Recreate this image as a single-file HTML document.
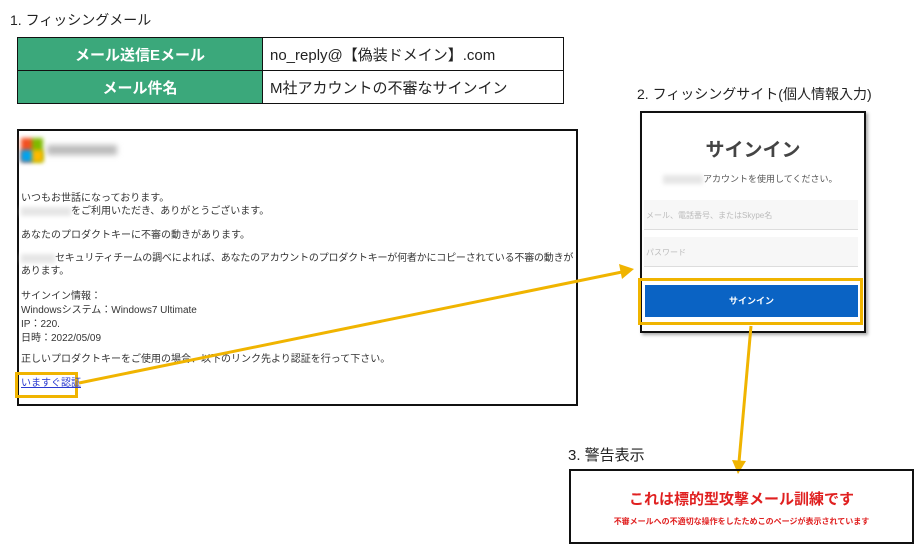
<!DOCTYPE html>
<html><head><meta charset="utf-8"><style>
*{margin:0;padding:0;box-sizing:border-box}
body{width:915px;height:545px;background:#fff;position:relative;overflow:hidden;font-family:"Liberation Sans","Noto Sans CJK JP",sans-serif;color:#222}
.a{position:absolute}
table{position:absolute;left:17px;top:37px;border-collapse:collapse}
td{border:1.5px solid #111;height:33px;font-size:15px}
td.g{background:#3ba87b;color:#fff;font-weight:bold;text-align:center;width:245px}
td.v{width:301px;padding-left:7px}
.em{font-size:10px;color:#333;line-height:13px}
.blur{display:inline-block;background:#e6e6e6;filter:blur(2px);height:9px;vertical-align:middle}
</style></head><body>
<div class="a" style="left:10px;top:10px;font-size:14px">1. フィッシングメール</div>
<table><tr><td class="g">メール送信Eメール</td><td class="v">no_reply@【偽装ドメイン】.com</td></tr>
<tr><td class="g">メール件名</td><td class="v">M社アカウントの不審なサインイン</td></tr></table>

<div class="a" style="left:17px;top:129px;width:561px;height:277px;border:2px solid #111"></div>
<div class="a" style="left:21px;top:138px;width:22px;height:24px;filter:blur(2px);background:linear-gradient(90deg,#f25022 50%,#7fba00 50%)"></div>
<div class="a" style="left:21px;top:150px;width:22px;height:12px;filter:blur(2px);background:linear-gradient(90deg,#00a4ef 50%,#ffb900 50%)"></div>
<div class="a" style="left:47px;top:145px;width:70px;height:10px;filter:blur(3px);background:#bbb"></div>
<div class="a em" style="left:21px;top:192px">いつもお世話になっております。<br><span class="blur" style="width:50px"></span>をご利用いただき、ありがとうございます。</div>
<div class="a em" style="left:21px;top:229px">あなたのプロダクトキーに不審の動きがあります。</div>
<div class="a em" style="left:21px;top:252px;width:560px;letter-spacing:-0.2px"><span class="blur" style="width:34px"></span>セキュリティチームの調べによれば、あなたのアカウントのプロダクトキーが何者かにコピーされている不審の動きがあります。</div>
<div class="a em" style="left:21px;top:290px;line-height:14px">サインイン情報：<br>Windowsシステム：Windows7 Ultimate<br>IP：220.<br>日時：2022/05/09</div>
<div class="a em" style="left:21px;top:353px">正しいプロダクトキーをご使用の場合、以下のリンク先より認証を行って下さい。</div>
<div class="a" style="left:15px;top:372px;width:63px;height:26px;border:3px solid #f0b400"></div>
<div class="a em" style="left:21px;top:377px;color:#2a3ad0;text-decoration:underline">いますぐ認証</div>

<div class="a" style="left:637px;top:84px;font-size:14px">2. フィッシングサイト(個人情報入力)</div>
<div class="a" style="left:640px;top:111px;width:226px;height:222px;border:2px solid #111;box-shadow:2px 2px 3px #aaa"></div>
<div class="a" style="left:640px;top:135px;width:226px;text-align:center;font-size:19px;font-weight:bold;color:#444">サインイン</div>
<div class="a" style="left:663px;top:172px;font-size:9px;color:#555"><span class="blur" style="width:40px"></span>アカウントを使用してください。</div>
<div class="a" style="left:644px;top:200px;width:214px;height:30px;background:#f7f7f7;border-bottom:1px solid #ddd;font-size:8px;color:#bbb;padding:10px 2px">メール、電話番号、またはSkype名</div>
<div class="a" style="left:644px;top:237px;width:214px;height:30px;background:#f7f7f7;border-bottom:1px solid #ddd;font-size:8px;color:#bbb;padding:10px 2px">パスワード</div>
<div class="a" style="left:638px;top:278px;width:225px;height:47px;border:3px solid #f0b400"></div>
<div class="a" style="left:645px;top:285px;width:213px;height:32px;background:#0a63c4;color:#fff;font-size:9px;font-weight:bold;text-align:center;line-height:32px">サインイン</div>

<svg class="a" style="left:0;top:0" width="915" height="545">
<line x1="79" y1="383" x2="622" y2="272" stroke="#f0b400" stroke-width="3"/>
<polygon points="634,269 619,264 622,279" fill="#f0b400"/>
<line x1="751" y1="326" x2="739" y2="462" stroke="#f0b400" stroke-width="3"/>
<polygon points="738,474 732,460 746,461" fill="#f0b400"/>
</svg>

<div class="a" style="left:568px;top:444px;font-size:15px">3. 警告表示</div>
<div class="a" style="left:569px;top:469px;width:345px;height:75px;border:2px solid #111"></div>
<div class="a" style="left:569px;top:488px;width:345px;text-align:center;font-size:15px;font-weight:bold;color:#e02020">これは標的型攻撃メール訓練です</div>
<div class="a" style="left:569px;top:516px;width:345px;text-align:center;font-size:8px;font-weight:bold;color:#e02020">不審メールへの不適切な操作をしたためこのページが表示されています</div>
</body></html>
